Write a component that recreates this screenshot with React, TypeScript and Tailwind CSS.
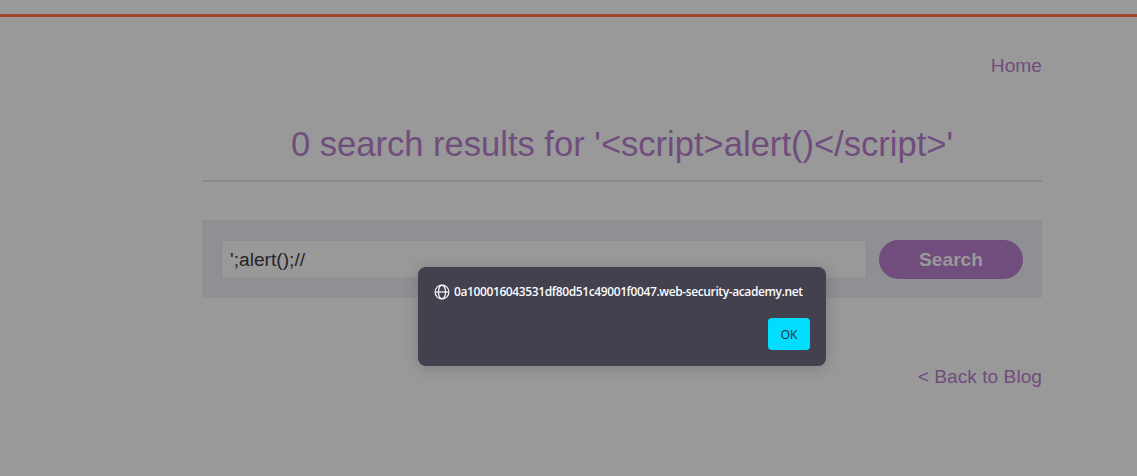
function GlobeIcon() {
  return (
    <svg viewBox="0 0 16 16" className="h-4 w-4 shrink-0" fill="none" stroke="#fbfbfe" strokeWidth="1.2">
      <circle cx="8" cy="8" r="6.9" />
      <ellipse cx="8" cy="8" rx="3.5" ry="6.9" />
      <path d="M1.1 8h13.8" />
    </svg>
  );
}

function AlertDialog() {
  return (
    <div
      role="alertdialog"
      className="absolute left-[418px] top-[267px] flex h-[99px] w-[408px] flex-col justify-between rounded-lg bg-[#42414d] p-4 font-['Open_Sans',sans-serif] text-[12px] shadow-[0_2px_14px_rgba(58,57,68,0.3)]"
    >
      <div className="flex h-[17px] items-center gap-1 text-[#fbfbfe]">
        <GlobeIcon />
        <span className="whitespace-nowrap font-semibold tracking-[-0.39px]">
          0a100016043531df80d51c49001f0047.web-security-academy.net
        </span>
      </div>
      <button className="h-8 w-[42px] self-end rounded bg-[#00ddff] pt-px text-[#2b2a33]">OK</button>
    </div>
  );
}

export default function App() {
  return (
    <div className="relative h-[476px] w-full overflow-hidden bg-[#99999a] font-['Liberation_Sans',Arial,sans-serif] text-[19.2px] leading-[22px] text-[#704d7c]">
      <div className="h-[17px] border-b-[3px] border-[#a3452b]" />
      <main className="ml-[202px] w-[840px]">
        <nav className="flex justify-end pt-[38px]">
          <a href="#">Home</a>
        </nav>
        <header className="mt-[37px] h-[68px] border-b-2 border-[#8b8b8c] pt-[10px] text-center">
          <h1 className="text-[34.56px] leading-10">{"0 search results for '<script>alert()</script>'"}</h1>
        </header>
        <form className="mt-[38px] flex h-[78px] items-center gap-3 bg-[#8e9093] px-[19px]">
          <input
            defaultValue="';alert();//"
            className="h-[39px] w-[646px] border border-[#8b8b8c] bg-[#99999a] px-2 pt-0.5 text-[#252528] outline-none"
          />
          <button type="button" className="h-[39px] w-36 rounded-full bg-[#704d7c] pt-0.5 font-bold text-[#99999a]">
            Search
          </button>
        </form>
        <div className="mt-[68px] flex justify-end">
          <a href="#">&lt; Back to Blog</a>
        </div>
      </main>
      <AlertDialog />
    </div>
  );
}
